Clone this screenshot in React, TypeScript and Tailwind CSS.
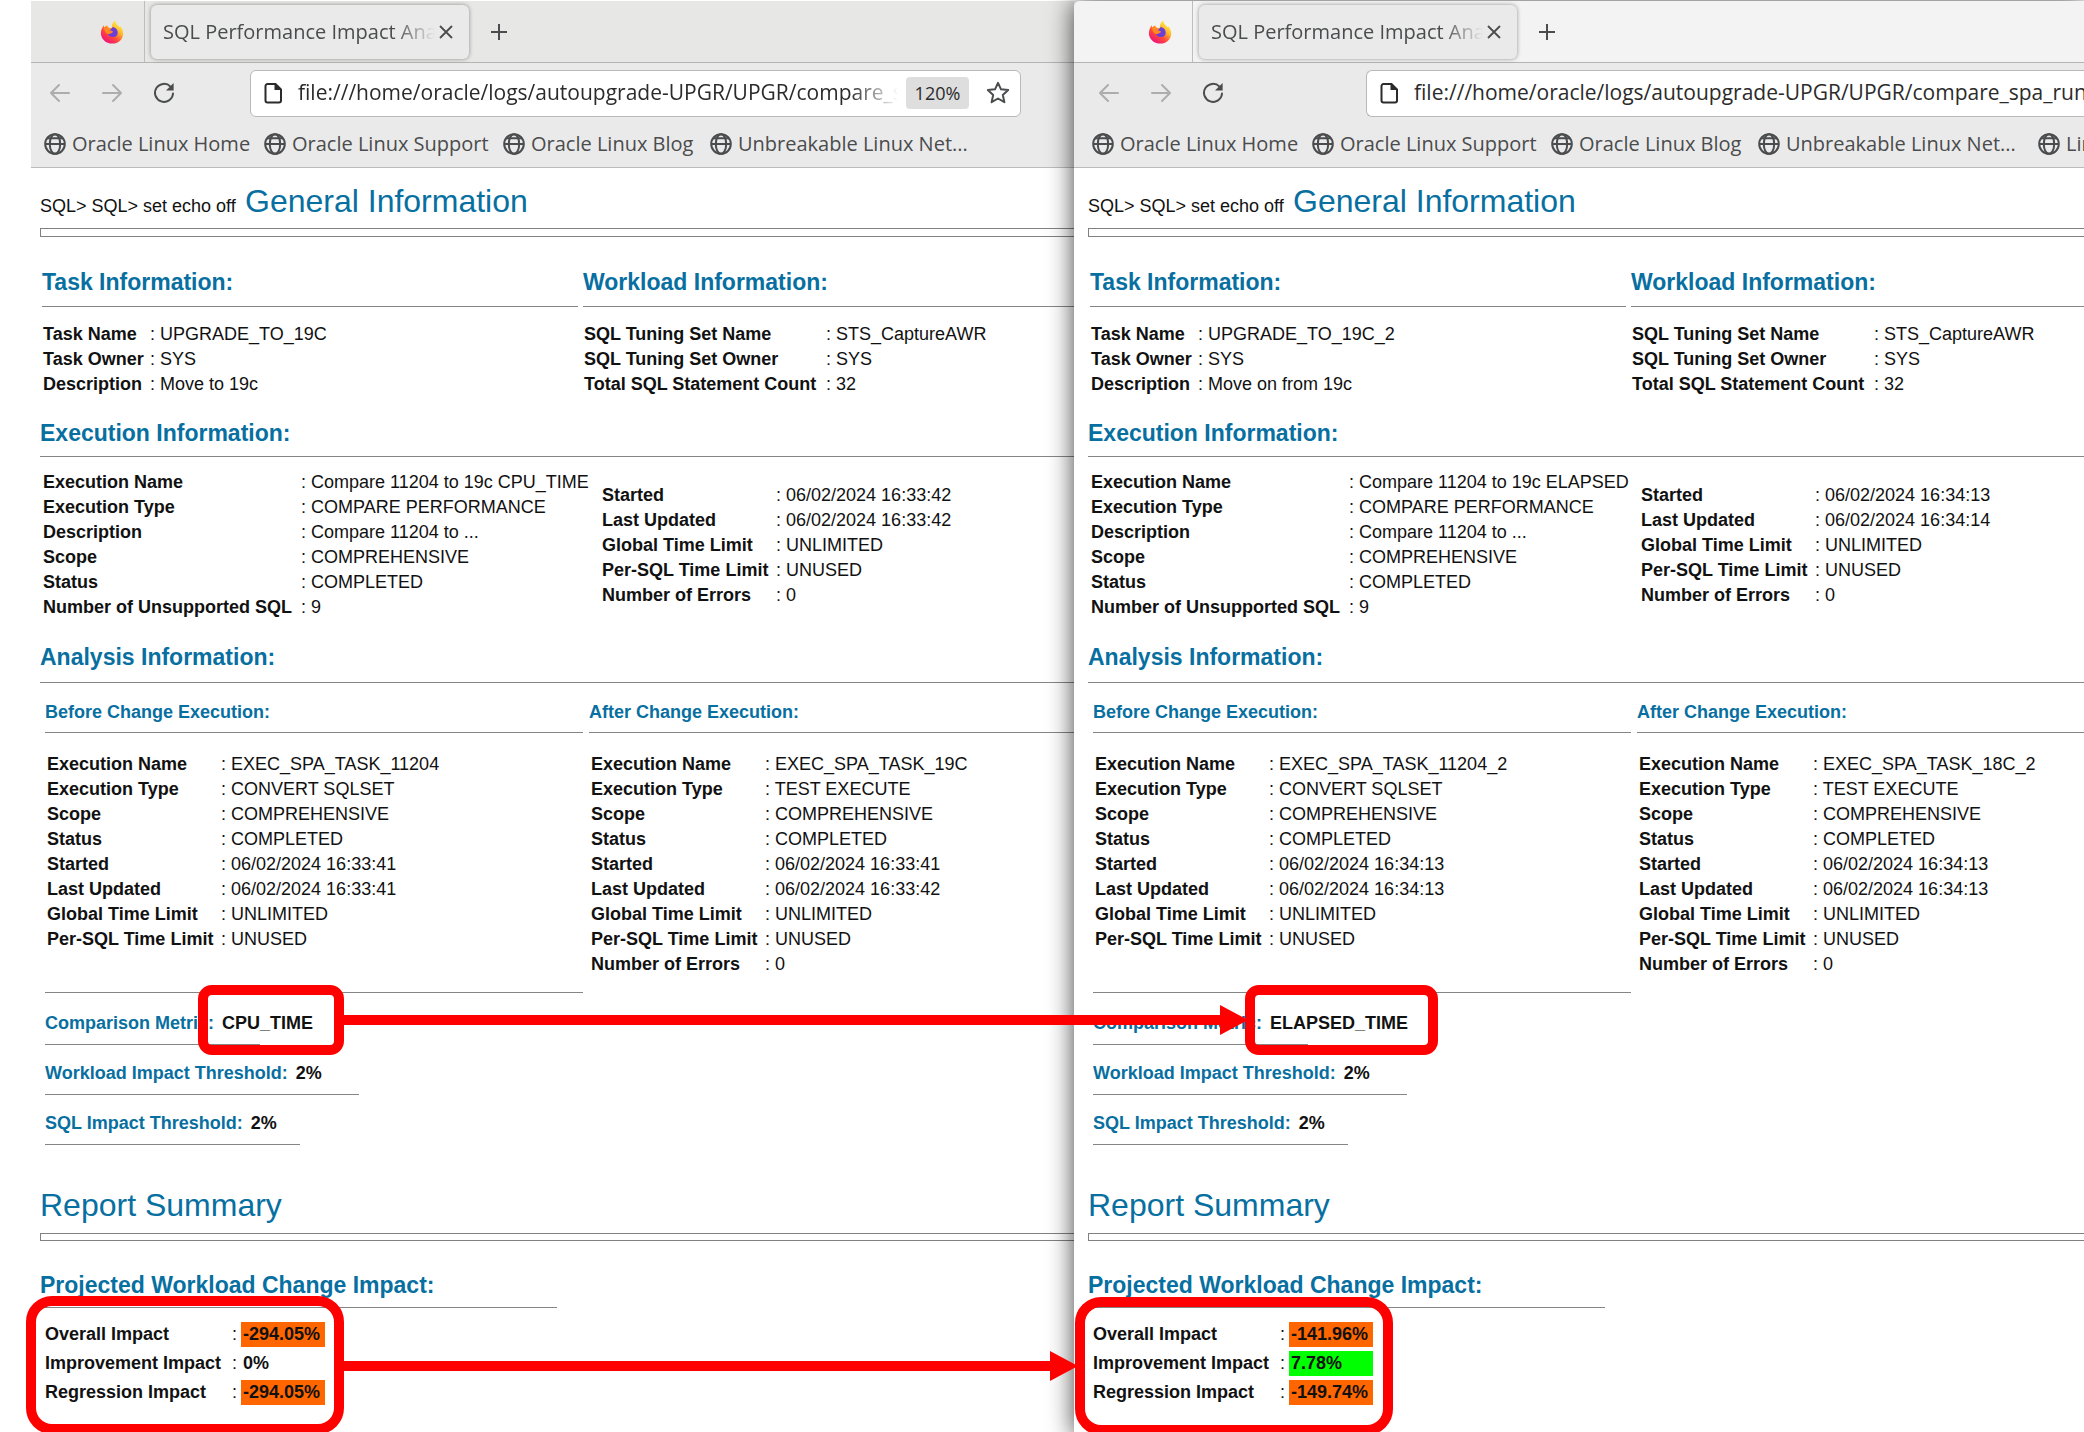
import React from "react";

type Pair = [string, string];
type Impact = { label: string; value: string; tone: "bad" | "good" | "none" };

type Report = {
  task: Pair[];
  execName: string;
  execTimes: [string, string];
  execWidth: string;
  before: Pair[];
  after: Pair[];
  metric: string;
  impacts: Impact[];
};

const workload: Pair[] = [
  ["SQL Tuning Set Name", "STS_CaptureAWR"],
  ["SQL Tuning Set Owner", "SYS"],
  ["Total SQL Statement Count", "32"],
];

const details = (name: string, type: string, started: string, updated: string): Pair[] => [
  ["Execution Name", name],
  ["Execution Type", type],
  ["Scope", "COMPREHENSIVE"],
  ["Status", "COMPLETED"],
  ["Started", started],
  ["Last Updated", updated],
  ["Global Time Limit", "UNLIMITED"],
  ["Per-SQL Time Limit", "UNUSED"],
];

const cpuReport: Report = {
  task: [
    ["Task Name", "UPGRADE_TO_19C"],
    ["Task Owner", "SYS"],
    ["Description", "Move to 19c"],
  ],
  execName: "Compare 11204 to 19c CPU_TIME",
  execTimes: ["06/02/2024 16:33:42", "06/02/2024 16:33:42"],
  execWidth: "w-[559px]",
  before: details("EXEC_SPA_TASK_11204", "CONVERT SQLSET", "06/02/2024 16:33:41", "06/02/2024 16:33:41"),
  after: [
    ...details("EXEC_SPA_TASK_19C", "TEST EXECUTE", "06/02/2024 16:33:41", "06/02/2024 16:33:42"),
    ["Number of Errors", "0"],
  ],
  metric: "CPU_TIME",
  impacts: [
    { label: "Overall Impact", value: "-294.05%", tone: "bad" },
    { label: "Improvement Impact", value: "0%", tone: "none" },
    { label: "Regression Impact", value: "-294.05%", tone: "bad" },
  ],
};

const elapsedReport: Report = {
  task: [
    ["Task Name", "UPGRADE_TO_19C_2"],
    ["Task Owner", "SYS"],
    ["Description", "Move on from 19c"],
  ],
  execName: "Compare 11204 to 19c ELAPSED",
  execTimes: ["06/02/2024 16:34:13", "06/02/2024 16:34:14"],
  execWidth: "w-[550px]",
  before: details("EXEC_SPA_TASK_11204_2", "CONVERT SQLSET", "06/02/2024 16:34:13", "06/02/2024 16:34:13"),
  after: [
    ...details("EXEC_SPA_TASK_18C_2", "TEST EXECUTE", "06/02/2024 16:34:13", "06/02/2024 16:34:13"),
    ["Number of Errors", "0"],
  ],
  metric: "ELAPSED_TIME",
  impacts: [
    { label: "Overall Impact", value: "-141.96%", tone: "bad" },
    { label: "Improvement Impact", value: "7.78%", tone: "good" },
    { label: "Regression Impact", value: "-149.74%", tone: "bad" },
  ],
};

function Firefox() {
  return (
    <svg viewBox="0 0 24 24" className="size-6" aria-hidden="true">
      <defs>
        <linearGradient id="fox" x1="0.85" y1="0.1" x2="0.25" y2="0.95">
          <stop offset="0" stopColor="#fff04a" />
          <stop offset="0.35" stopColor="#ffb62b" />
          <stop offset="0.65" stopColor="#ff4b3a" />
          <stop offset="1" stopColor="#f0127a" />
        </linearGradient>
      </defs>
      <path
        fill="url(#fox)"
        d="M15.600 .600c-.3 2 .3 3 1.800 4.500 1 1 1.700 1.700 2.200 2.700.2-.8.1-1.500 0-2 2.200 2 3.600 4.700 3.600 7.600 0 5.700-4.800 10.200-11 10.200S.900 19 .900 13.200c0-3.200 1.300-6 3-7.900 0 .8.100 1.500.4 2.100.9-1.100 2-1.700 3.200-1.900 0 1 .6 2 1.700 2.400 1.300-.2 2-.1 2.800.2C11.600 4.700 12.800 1.900 15.600.6z"
      />
      <path
        fill="#6a3fd8"
        d="M12.200 7.400c2.700-.4 5.500 1.900 5.500 5 0 2.900-2.200 4.700-5 4.700-2.600 0-4.400-1.500-4.900-3.600 1.300.8 2.700.7 3.600-.3.700-.7 1.500-.9 1.700-1.500-.8-.9-2.400-.9-3.200-1.700.6-.4 1.800-1.400 2.300-2.600z"
      />
      <path fill="#ff8a1f" d="M4 8.500c1.500-1.600 4.200-1.300 6 .3-.9.3-1.500.9-1.500 1.600 1 1 3.400.5 4 1.400-.4 1.200-1.900 1-2.600 1.700-1.200 1-3 .5-4.300-.9C5 11.400 4.300 10 4 8.500z" />
    </svg>
  );
}

function Arrow({ flip = false }: { flip?: boolean }) {
  return (
    <svg viewBox="0 0 22 22" className="size-[22px]" fill="none" stroke="currentColor" strokeWidth="2" strokeLinecap="round" strokeLinejoin="round" aria-hidden="true">
      {flip ? <path d="M2 11h18M12 3l8 8-8 8" /> : <path d="M20 11H2M10 3l-8 8 8 8" />}
    </svg>
  );
}

function Reload() {
  return (
    <svg viewBox="0 0 22 22" className="size-[22px]" aria-hidden="true">
      <path d="M17.500 4.600A9 9 0 1 0 20 11.500" fill="none" stroke="currentColor" strokeWidth="2" strokeLinecap="round" />
      <path d="M20.600 1v7.600H13z" fill="currentColor" />
    </svg>
  );
}

function Page() {
  return (
    <svg viewBox="0 0 18 22" className="h-[22px] w-[18px] shrink-0" aria-hidden="true">
      <path d="M3.500 2h8L17 7.500V18.500a2 2 0 0 1-2 2H3.500a2 2 0 0 1-2-2V4a2 2 0 0 1 2-2z" fill="none" stroke="currentColor" strokeWidth="2" />
      <path d="M10.500 1.500V8H17z" fill="currentColor" />
    </svg>
  );
}

function Globe() {
  return (
    <svg viewBox="0 0 22 22" className="size-[22px] shrink-0" fill="none" stroke="currentColor" strokeWidth="2" aria-hidden="true">
      <circle cx="11" cy="11" r="9.800" />
      <ellipse cx="11" cy="11" rx="5.200" ry="9.800" />
      <path d="M1 11h20M3 5.200h16" />
    </svg>
  );
}

function Star() {
  return (
    <svg viewBox="0 0 24 24" className="size-6" fill="none" stroke="currentColor" strokeWidth="2" strokeLinejoin="round" aria-hidden="true">
      <path d="M12 1.800l3 6.500 7.200.8-5.400 4.800 1.600 7.300L12 17.500l-6.400 3.700 1.600-7.300L1.800 9.100 9 8.300z" />
    </svg>
  );
}

function Bookmark({ text, width = "" }: { text: string; width?: string }) {
  return (
    <a href="#bookmark" className={`flex shrink-0 items-center gap-1.5 whitespace-nowrap ${width}`}>
      <Globe />
      <span>{text}</span>
    </a>
  );
}

function Chrome({ front }: { front: boolean }) {
  return (
    <header className="font-['Open_Sans','Noto_Sans',sans-serif] text-[20px] text-[#4a4c4d]">
      <div className={`flex h-[62px] items-center border-b border-[#b4b4b4] ${front ? "bg-[#f3f3f3]" : "bg-[#e7e7e5]"}`}>
        <div className={`flex h-full shrink-0 items-center justify-end border-r border-[#bdbdbd] pr-5 ${front ? "w-[119px]" : "w-[114px]"}`}>
          <Firefox />
        </div>
        <div className="ml-1.5 flex h-[54px] w-[318px] shrink-0 items-center rounded-md bg-[#eaeaea] pr-4 pl-3 shadow-[0_0_4px_rgba(0,0,0,0.4)]">
          <span className="min-w-0 flex-1 overflow-hidden whitespace-nowrap [mask-image:linear-gradient(to_right,black_85%,transparent)]">
            SQL Performance Impact Analyzer
          </span>
          <button type="button" aria-label="Close tab" className="ml-1">
            <svg viewBox="0 0 14 14" className="size-3.5" stroke="currentColor" strokeWidth="1.800" aria-hidden="true">
              <path d="M1 1l12 12M13 1L1 13" />
            </svg>
          </button>
        </div>
        <button type="button" aria-label="New tab" className="ml-[21px]">
          <svg viewBox="0 0 18 18" className="size-[18px]" stroke="currentColor" strokeWidth="2" aria-hidden="true">
            <path d="M9 1v16M1 9h16" />
          </svg>
        </button>
      </div>
      <div className="border-b border-[#bcbcbc] bg-[#eaeaea]">
        <div className={`flex h-[60px] items-center ${front ? "pl-6" : "pr-[53px] pl-[18px]"}`}>
          <button type="button" aria-label="Back" className="text-[#adadad]"><Arrow /></button>
          <button type="button" aria-label="Forward" className="ml-[30px] text-[#adadad]"><Arrow flip /></button>
          <button type="button" aria-label="Reload" className="ml-[30px]"><Reload /></button>
          <div className={`flex h-[47px] min-w-0 flex-1 items-center border border-[#b9b9b9] bg-white text-[#2b2b2b] ${front ? "ml-[142px] rounded-l-md border-r-0 pl-[13px]" : "ml-[75px] rounded-md pr-2.5 pl-[13px]"}`}>
            <Page />
            <input
              aria-label="Address"
              readOnly
              defaultValue="file:///home/oracle/logs/autoupgrade-UPGR/UPGR/compare_spa_runs.html"
              className={`ml-4 min-w-0 flex-1 bg-transparent text-[21px] outline-none ${front ? "" : "[mask-image:linear-gradient(to_right,black_92%,transparent)]"}`}
            />
            {!front && (
              <>
                <button type="button" className="ml-2 h-8 w-[63px] shrink-0 rounded bg-[#dedede] text-[18px]">120%</button>
                <button type="button" aria-label="Bookmark this page" className="ml-[17px] text-[#4a4c4d]"><Star /></button>
              </>
            )}
          </div>
        </div>
        <nav className={`flex h-[44px] items-center gap-[18px] overflow-hidden pb-0.5 ${front ? "pl-[18px]" : "pl-[13px]"}`}>
          <Bookmark text="Oracle Linux Home" width="w-[202px]" />
          <Bookmark text="Oracle Linux Support" width="w-[221px]" />
          <Bookmark text="Oracle Linux Blog" width="w-[189px]" />
          <Bookmark text="Unbreakable Linux Net..." width="w-[262px]" />
          {front && <Bookmark text="Linux" />}
        </nav>
      </div>
    </header>
  );
}

function Facts({ rows, label }: { rows: Pair[]; label: string }) {
  return (
    <table className="border-collapse leading-[25px]">
      <tbody>
        {rows.map(([name, value]) => (
          <tr key={name}>
            <th scope="row" className={`p-0 text-left whitespace-nowrap ${label}`}>{name}</th>
            <td className="p-0 whitespace-nowrap">: {value}</td>
          </tr>
        ))}
      </tbody>
    </table>
  );
}

function Rule({ className = "" }: { className?: string }) {
  return <hr className={`h-px border-0 bg-[#858585] ${className}`} />;
}

function H2({ children, className = "" }: { children: React.ReactNode; className?: string }) {
  return <h2 className={`text-[23px] leading-7 font-bold text-[#086fa1] ${className}`}>{children}</h2>;
}

function H3({ children }: { children: React.ReactNode }) {
  return <h3 className="leading-[25px] font-bold text-[#086fa1]">{children}</h3>;
}

function Setting({ name, value, rule }: { name: string; value: string; rule: string }) {
  return (
    <div>
      <p className="flex gap-2 leading-[25px] font-bold">
        <span className="text-[#086fa1]">{name}:</span>
        <span>{value}</span>
      </p>
      <Rule className={`mt-2 ${rule}`} />
    </div>
  );
}

const tones = { bad: "bg-[#ff6600]", good: "bg-[#00ff00]", none: "" };

function ReportView({ report, front }: { report: Report; front: boolean }) {
  return (
    <main className={`pt-[13px] pb-[27px] font-['Liberation_Sans',Arial,sans-serif] text-[18px] text-[#111] ${front ? "pl-[14px]" : "pl-[9px]"}`}>
      <div className="flex items-baseline gap-[5px] leading-10 whitespace-nowrap">
        <span className="w-[200px]">SQL&gt; SQL&gt; set echo off</span>
        <h1 className="text-[32px] text-[#086fa1]">General Information</h1>
      </div>
      <div className="mt-0.5 h-[9px] border border-r-0 border-[#808080]" />

      <div className="mt-[31px] ml-0.5 flex gap-[5px]">
        <section className="w-[536px] shrink-0">
          <H2>Task Information:</H2>
          <Rule className="mt-2.5 mb-[15px]" />
          <div className="pl-px"><Facts rows={report.task} label="w-[107px]" /></div>
        </section>
        <section className="min-w-0 flex-1">
          <H2>Workload Information:</H2>
          <Rule className="mt-2.5 mb-[15px]" />
          <div className="pl-px"><Facts rows={workload} label="w-[242px]" /></div>
        </section>
      </div>

      <section className="mt-[22px]">
        <H2>Execution Information:</H2>
        <Rule className="mt-[9px] mb-[13px]" />
        <div className="flex items-center pl-[3px]">
          <div className={`shrink-0 ${report.execWidth}`}>
            <Facts
              label="w-[258px]"
              rows={[
                ["Execution Name", report.execName],
                ["Execution Type", "COMPARE PERFORMANCE"],
                ["Description", "Compare 11204 to ..."],
                ["Scope", "COMPREHENSIVE"],
                ["Status", "COMPLETED"],
                ["Number of Unsupported SQL", "9"],
              ]}
            />
          </div>
          <Facts
            label="w-[174px]"
            rows={[
              ["Started", report.execTimes[0]],
              ["Last Updated", report.execTimes[1]],
              ["Global Time Limit", "UNLIMITED"],
              ["Per-SQL Time Limit", "UNUSED"],
              ["Number of Errors", "0"],
            ]}
          />
        </div>
      </section>

      <section className="mt-[23px]">
        <H2>Analysis Information:</H2>
        <Rule className="mt-[11px] mb-[17px]" />
        <div className="ml-[5px] flex gap-[6px]">
          <section className="w-[538px] shrink-0">
            <H3>Before Change Execution:</H3>
            <Rule className="mt-[7px] mb-[19px]" />
            <div className="pl-0.5"><Facts rows={report.before} label="w-[174px]" /></div>
          </section>
          <section className="min-w-0 flex-1">
            <H3>After Change Execution:</H3>
            <Rule className="mt-[7px] mb-[19px]" />
            <div className="pl-0.5"><Facts rows={report.after} label="w-[174px]" /></div>
          </section>
        </div>
        <div className="ml-[5px]">
          <Rule className="mt-[15px] mb-[18px] w-[538px]" />
          <div className="flex flex-col gap-4">
            <Setting name="Comparison Metric" value={report.metric} rule="w-[215px]" />
            <Setting name="Workload Impact Threshold" value="2%" rule="w-[314px]" />
            <Setting name="SQL Impact Threshold" value="2%" rule="w-[255px]" />
          </div>
        </div>
      </section>

      <h1 className="mt-10 text-[32px] leading-10 text-[#086fa1]">Report Summary</h1>
      <div className="mt-2 h-2 border border-r-0 border-[#808080]" />
      <section className="mt-[30px]">
        <H2>Projected Workload Change Impact:</H2>
        <Rule className="mt-2 w-[517px]" />
        <table className="mt-2.5 ml-[5px] border-separate border-spacing-x-0 border-spacing-y-1 leading-[25px]">
          <tbody>
            {report.impacts.map((item) => (
              <tr key={item.label}>
                <th scope="row" className="w-[187px] p-0 text-left">{item.label}</th>
                <td className="w-[9px] p-0">:</td>
                <td className={`w-[84px] p-0 pl-0.5 font-bold ${tones[item.tone]}`}>{item.value}</td>
              </tr>
            ))}
          </tbody>
        </table>
      </section>
    </main>
  );
}

function BrowserWindow({ report, front = false }: { report: Report; front?: boolean }) {
  return (
    <article
      className={
        front
          ? "relative min-w-0 overflow-hidden rounded-tl-md bg-white shadow-[0_0_26px_rgba(0,0,0,0.75)]"
          : "min-w-0 overflow-hidden bg-white"
      }
    >
      <Chrome front={front} />
      <ReportView report={report} front={front} />
    </article>
  );
}

function Pointer({ className }: { className: string }) {
  return (
    <div className={`absolute flex items-center ${className}`}>
      <div className="h-2.5 flex-1 bg-[#ff0000]" />
      <svg viewBox="0 0 28 30" className="h-[30px] w-7" aria-hidden="true">
        <path d="M0 0l28 15L0 30z" fill="#ff0000" />
      </svg>
    </div>
  );
}

export default function App() {
  return (
    <div className="relative overflow-hidden bg-white pt-px">
      <div className="grid grid-cols-[1043fr_1010fr] pl-[31px]">
        <BrowserWindow report={cpuReport} />
        <BrowserWindow report={elapsedReport} front />
      </div>
      <div className="pointer-events-none absolute inset-0">
        <div className="absolute top-[985px] left-[198px] h-[70px] w-[146px] rounded-[14px] border-10 border-[#ff0000]" />
        <div className="absolute top-[985px] left-[1245px] h-[70px] w-[193px] rounded-[14px] border-10 border-[#ff0000]" />
        <div className="absolute top-[1296px] left-[26px] h-[138px] w-[318px] rounded-[26px] border-10 border-[#ff0000]" />
        <div className="absolute top-[1297px] left-[1075px] h-[138px] w-[318px] rounded-[26px] border-10 border-[#ff0000]" />
        <Pointer className="top-[1005px] left-[342px] w-[906px]" />
        <Pointer className="top-[1351px] left-[342px] w-[736px]" />
      </div>
    </div>
  );
}
